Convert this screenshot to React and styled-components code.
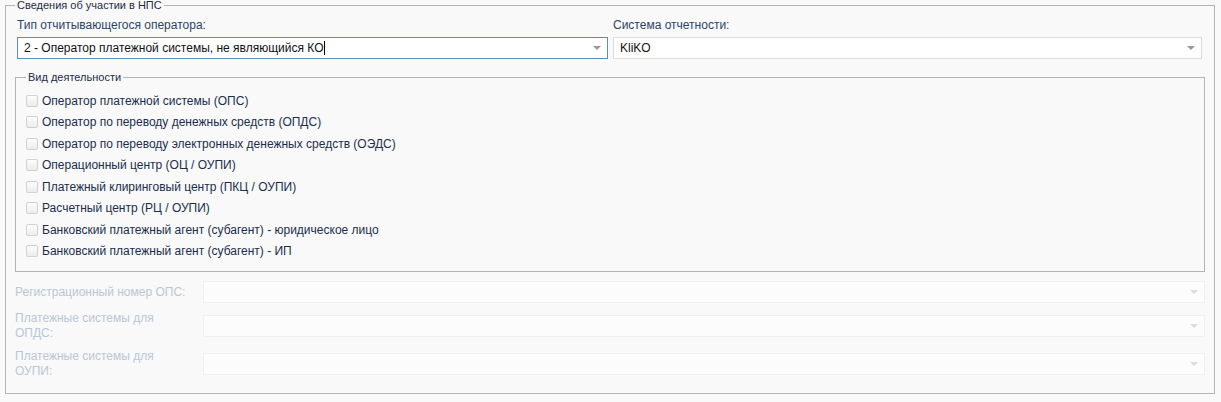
import React from "react";
import styled, { createGlobalStyle } from "styled-components";

const Global = createGlobalStyle`
  html, body { margin: 0; padding: 0; background: #f9f9f9; }
  body { font-family: "Liberation Sans", Arial, sans-serif; font-size: 12px; color: #1d3250; }
  * { box-sizing: border-box; }
`;

const Page = styled.div`
  width: 1221px;
  height: 402px;
  background: #f9f9f9;
  padding: 0 6px 0 5px;
`;

const Fieldset = styled.fieldset`
  margin: 0;
  border: 1px solid #b4b4b4;
  padding: 0 ${(p) => p.$pr}px ${(p) => p.$pb}px ${(p) => p.$pl}px;
  min-width: 0;
`;

const Legend = styled.legend`
  font-size: 11px;
  line-height: 11px;
  padding: 0 2px;
  color: #1d2c44;
`;

const TopRow = styled.div`
  display: grid;
  grid-template-columns: 591px 1fr;
  column-gap: 5px;
  padding: 7px 3px 0 2px;
`;

const Field = styled.div`
  display: flex;
  flex-direction: column;
  gap: 5px;
`;

const Label = styled.label`
  font-size: 12px;
  line-height: 14px;
  color: #2a4566;
`;

const Combo = styled.div`
  position: relative;
  height: 22px;
  border: 1px solid ${(p) => (p.$disabled ? "#efefef" : p.$focused ? "#5f8fac" : "#dcdcdc")};
  background: ${(p) => (p.$disabled ? "#fcfcfc" : "#fff")};
  padding: 0 20px 0 6px;
  display: flex;
  align-items: center;
  font-size: 12px;
  color: #111;
  white-space: nowrap;
`;

const Caret = styled.span`
  display: inline-block;
  width: 1px;
  height: 14px;
  background: #000;
  margin-left: 1px;
`;

const Arrow = styled.span`
  position: absolute;
  right: 6px;
  top: 50%;
  margin-top: -2px;
  width: 0;
  height: 0;
  border-left: 4px solid transparent;
  border-right: 4px solid transparent;
  border-top: 4px solid ${(p) => (p.$disabled ? "#dcdcdc" : "#9a9a9a")};
`;

const InnerWrap = styled.div`
  margin-top: 13px;
`;

const CheckList = styled.div`
  display: flex;
  flex-direction: column;
  padding-top: 7px;
`;

const CheckRow = styled.div`
  height: 21.5px;
  display: flex;
  align-items: center;
  gap: 4px;
  font-size: 12px;
  color: #1a2e4c;
`;

const Box = styled.span`
  width: 12px;
  height: 12px;
  border: 1px solid #d2d2d2;
  border-radius: 2px;
  background: linear-gradient(#fdfdfd, #ececec);
  flex: none;
`;

const Rows = styled.div`
  display: flex;
  flex-direction: column;
  gap: 8px;
  margin-top: 9px;
`;

const FormRow = styled.div`
  display: grid;
  grid-template-columns: 178px 1fr;
  column-gap: 10px;
  align-items: center;
`;

const DimLabel = styled.label`
  font-size: 12px;
  line-height: 15px;
  color: #b9c7d6;
`;

const activities = [
  "Оператор платежной системы (ОПС)",
  "Оператор по переводу денежных средств (ОПДС)",
  "Оператор по переводу электронных денежных средств (ОЭДС)",
  "Операционный центр (ОЦ / ОУПИ)",
  "Платежный клиринговый центр (ПКЦ / ОУПИ)",
  "Расчетный центр (РЦ / ОУПИ)",
  "Банковский платежный агент (субагент) - юридическое лицо",
  "Банковский платежный агент (субагент) - ИП",
];

const bottom = [
  "Регистрационный номер ОПС:",
  "Платежные системы для ОПДС:",
  "Платежные системы для ОУПИ:",
];

export default function App() {
  return (
    <Page>
      <Global />
      <Fieldset $pl={9} $pr={9} $pb={14}>
        <Legend>Сведения об участии в НПС</Legend>
        <TopRow>
          <Field>
            <Label>Тип отчитывающегося оператора:</Label>
            <Combo $focused>
              <span>2 - Оператор платежной системы, не являющийся КО</span>
              <Caret />
              <Arrow />
            </Combo>
          </Field>
          <Field>
            <Label>Система отчетности:</Label>
            <Combo>
              <span>KliKO</span>
              <Arrow />
            </Combo>
          </Field>
        </TopRow>
        <InnerWrap>
          <Fieldset $pl={10} $pr={10} $pb={9}>
            <Legend>Вид деятельности</Legend>
            <CheckList>
              {activities.map((a) => (
                <CheckRow key={a}>
                  <Box />
                  <span>{a}</span>
                </CheckRow>
              ))}
            </CheckList>
          </Fieldset>
        </InnerWrap>
        <Rows>
          {bottom.map((b) => (
            <FormRow key={b}>
              <DimLabel>{b}</DimLabel>
              <Combo $disabled>
                <Arrow $disabled />
              </Combo>
            </FormRow>
          ))}
        </Rows>
      </Fieldset>
    </Page>
  );
}
